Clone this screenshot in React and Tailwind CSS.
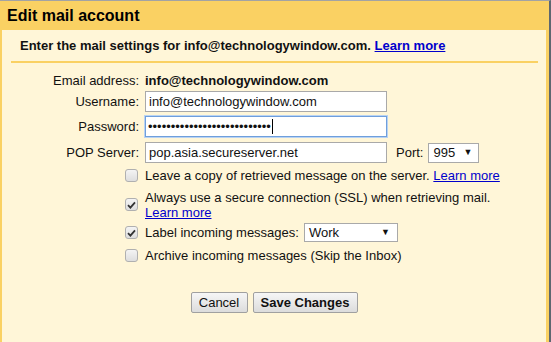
import React from "react";

const Box = ({ checked }) => (
  <span className="w-[13px] h-[13px] shrink-0 rounded-[3px] border border-[#b0b0b0] bg-gradient-to-b from-[#f4f4f4] to-[#dedede] flex items-center justify-center">
    {checked && (
      <svg width="9" height="8" viewBox="0 0 9 8">
        <path d="M1 4.2 L3.4 6.6 L8 1.4" fill="none" stroke="#333" strokeWidth="1.8" />
      </svg>
    )}
  </span>
);

const Field = ({ label, children }) => (
  <div className="flex items-center">
    <div className="w-[138px] text-right pr-[1px]">{label}</div>
    <div className="ml-[5px] flex items-center">{children}</div>
  </div>
);

const App = () => {
  // password dots
  const dots = "•".repeat(27);

  return (
    <div className="w-[551px] h-[342px] overflow-hidden bg-[#fad163] border-t border-t-[#a3a3a3] border-r-2 border-r-[#5d6770] flex flex-col text-[13px] leading-[15px] text-[#111] font-['Liberation_Sans',Arial,sans-serif]">
      {/* header */}
      <div className="h-[29px] shrink-0 pl-[7px] flex items-center text-[16px] font-bold text-black">
        Edit mail account
      </div>

      <div className="flex-1 ml-[2px] mr-[3px] bg-[#fff6d8]">
        <div className="pt-[8px] pl-[18px] font-bold">
          Enter the mail settings for info@technologywindow.com.{" "}
          <span className="text-[#0000cc] underline">Learn more</span>
        </div>
        <div className="mt-[8px] ml-[9px] mr-[8px] h-[2px] bg-[#fad163]" />

        <div className="mt-[10px] flex flex-col">
          <Field label="Email address:">
            <span className="font-bold">info@technologywindow.com</span>
          </Field>

          <div className="mt-[3px]">
            <Field label="Username:">
              <div className="w-[242px] h-[21px] bg-white border border-[#a9a9a9] pl-[3px] flex items-center">
                info@technologywindow.com
              </div>
            </Field>
          </div>

          <div className="mt-[4px]">
            <Field label="Password:">
              <div className="w-[242px] h-[21px] bg-white border border-[#6f9fdc] shadow-[0_0_0_1px_#b9d3f3] pl-[2px] flex items-center">
                <span className="text-[13px]">{dots}</span>
                <span className="w-px h-[15px] bg-black ml-[1px]" />
              </div>
            </Field>
          </div>

          <div className="mt-[5px]">
            <Field label="POP Server:">
              <div className="w-[242px] h-[21px] bg-white border border-[#a9a9a9] pl-[3px] flex items-center">
                pop.asia.secureserver.net
              </div>
              <span className="ml-[9px]">Port:</span>
              <div className="ml-[5px] w-[51px] h-[20px] bg-white border border-[#a9a9a9] pl-[4px] pr-[6px] flex items-center justify-between">
                <span>995</span>
                <span className="text-[9px]">▼</span>
              </div>
            </Field>
          </div>

          {/* options */}
          <div className="mt-[5px] pl-[123px] flex flex-col">
            <div className="flex items-center gap-[7px]">
              <Box />
              <span>
                Leave a copy of retrieved message on the server.{" "}
                <span className="text-[#0000cc] underline">Learn more</span>
              </span>
            </div>

            <div className="mt-[7px] flex items-start gap-[7px]">
              <span className="mt-[8px]">
                <Box checked />
              </span>
              <div>
                <div>Always use a secure connection (SSL) when retrieving mail.</div>
                <div className="text-[#0000cc] underline">Learn more</div>
              </div>
            </div>

            <div className="mt-[3px] flex items-center gap-[7px]">
              <Box checked />
              <span>Label incoming messages:</span>
              <div className="-ml-[2px] w-[94px] h-[19px] bg-white border border-[#a9a9a9] pl-[4px] pr-[7px] flex items-center justify-between">
                <span>Work</span>
                <span className="text-[9px]">▼</span>
              </div>
            </div>

            <div className="mt-[6px] flex items-center gap-[7px]">
              <Box />
              <span>Archive incoming messages (Skip the Inbox)</span>
            </div>
          </div>

          {/* buttons */}
          <div className="mt-[29px] flex justify-center gap-[5px]">
            <button className="w-[57px] h-[21px] rounded-[2px] border border-[#a0a0a0] bg-gradient-to-b from-[#f6f6f6] to-[#dcdcdc] text-[13px] text-[#111]">
              Cancel
            </button>
            <button className="w-[105px] h-[21px] rounded-[2px] border border-[#a0a0a0] bg-gradient-to-b from-[#f6f6f6] to-[#dcdcdc] text-[13px] font-bold text-[#111]">
              Save Changes
            </button>
          </div>
        </div>
      </div>
    </div>
  );
};

export default App;
